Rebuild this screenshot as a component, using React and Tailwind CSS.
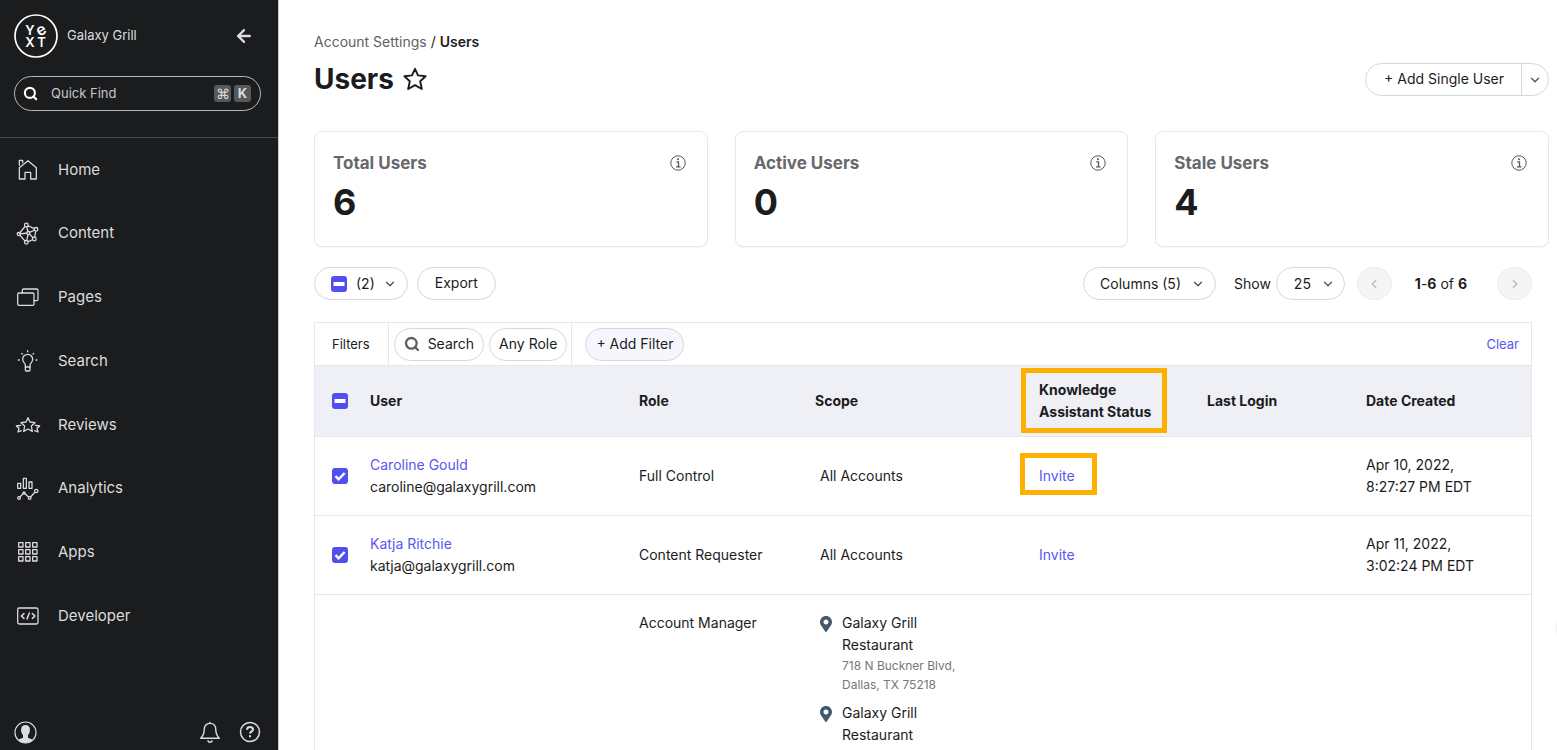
import { ArrowLeft, ChevronDown, ChevronLeft, ChevronRight, Search } from "lucide-react";
import { FaMapMarkerAlt } from "react-icons/fa";

const HomeIcon = () => (
  <>
    <path d="M13 66V32L39 11L64 32V66H47V46H30V66Z" />
    <path d="M13 25V10H23V17" />
  </>
);

const ContentIcon = () => (
  <>
    <path d="M34 12L63 25L58 54L34 64L11 39ZM40 36L34 12M40 36L63 25M40 36L58 54M40 36L34 64M40 36L11 39" />
    <g fill="#1b1c1e">
      <circle cx="34" cy="12" r="5.5" />
      <circle cx="63" cy="25" r="5.5" />
      <circle cx="58" cy="54" r="5.5" />
      <circle cx="34" cy="64" r="5.5" />
      <circle cx="11" cy="39" r="4.5" />
      <circle cx="40" cy="36" r="4.5" />
    </g>
  </>
);

const PagesIcon = () => (
  <>
    <rect x="8" y="27" width="49" height="37" rx="4" />
    <path d="M22 27V19Q22 15 26 15H65Q69 15 69 19V46Q69 50 65 50H57" />
  </>
);

const BulbIcon = () => (
  <>
    <path d="M31 57V51C31 46 23 44 23 34A15 15 0 0 1 53 34C53 44 45 46 45 51V57Z" />
    <path d="M31 57V66Q31 69 34 69H42Q45 69 45 66V57" />
    <path d="M38 8V11M20 16L22 18M56 16L54 18M10 36H13M63 36H66" />
  </>
);

const ReviewsIcon = () => (
  <>
    <path d="M39 17L45 30L60 32L49 42L52 58L39 51L26 58L29 42L18 32L33 30Z" />
    <path d="M17 40L4 42L12 49L9 60L19 56M61 40L74 42L66 49L69 60L59 56" />
  </>
);

const AnalyticsIcon = () => (
  <>
    <rect x="8" y="22" width="9" height="15" />
    <rect x="25" y="7" width="9" height="30" />
    <rect x="42" y="18" width="9" height="19" />
    <path d="M12 66L27 50L44 66L63 45" />
    <g fill="#1b1c1e">
      <circle cx="12" cy="66" r="4" />
      <circle cx="27" cy="51" r="3" />
      <circle cx="44" cy="66" r="4" />
      <circle cx="64" cy="45" r="5" />
    </g>
  </>
);

const AppsIcon = () => (
  <>
    {[11, 32, 53].map((y) =>
      [11, 32, 53].map((x) => <rect key={`${x}-${y}`} x={x} y={y} width="13" height="13" />)
    )}
  </>
);

const DeveloperIcon = () => (
  <>
    <rect x="8" y="15" width="61" height="48" rx="5" />
    <path d="M27 32L19 39L27 46M36 48L43 30M52 32L60 39L52 46" strokeWidth="4.5" />
  </>
);

const navItems = [
  ["Home", HomeIcon],
  ["Content", ContentIcon],
  ["Pages", PagesIcon],
  ["Search", BulbIcon],
  ["Reviews", ReviewsIcon],
  ["Analytics", AnalyticsIcon],
  ["Apps", AppsIcon],
  ["Developer", DeveloperIcon],
];

const stats = [
  ["Total Users", "6"],
  ["Active Users", "0"],
  ["Stale Users", "4"],
];

const users = [
  {
    name: "Caroline Gould",
    email: "caroline@galaxygrill.com",
    role: "Full Control",
    date: "Apr 10, 2022,",
    time: "8:27:27 PM EDT",
    highlight: true,
  },
  {
    name: "Katja Ritchie",
    email: "katja@galaxygrill.com",
    role: "Content Requester",
    date: "Apr 11, 2022,",
    time: "3:02:24 PM EDT",
    highlight: false,
  },
];

const locations = [
  ["718 N Buckner Blvd,", "Dallas, TX 75218"],
  ["3000 Blackburn St,", "Dallas, TX 75204"],
];

function Logo() {
  return (
    <svg viewBox="0 0 44 44" className="size-11 shrink-0" role="img" aria-label="Yext">
      <circle cx="22" cy="22" r="21" fill="none" stroke="#fff" strokeWidth="1.7" />
      <g fill="#fff" fontFamily="Inter, sans-serif" fontSize="13" fontWeight="600" textAnchor="middle">
        <text x="16" y="21">Y</text>
        <text x="27.5" y="21" fontSize="16" transform="rotate(-28 27.500 17)">e</text>
        <text x="16" y="33">X</text>
        <text x="27.5" y="33">T</text>
      </g>
    </svg>
  );
}

function Sidebar() {
  return (
    <aside className="flex w-[279px] shrink-0 flex-col border-r border-[#c9c9ca] bg-[#1b1c1e] text-[#dcdddf]">
      <div className="flex items-center px-3.5 pt-3.5">
        <Logo />
        <span className="ml-[9px] text-[13px]">Galaxy Grill</span>
        <button type="button" aria-label="Collapse menu" className="mr-2.5 ml-auto">
          <ArrowLeft className="size-5" strokeWidth={2.8} />
        </button>
      </div>
      <div className="px-3.5 pt-[18px] pr-[17px] pb-[26px]">
        <label className="flex h-[35px] items-center rounded-full border border-[#b8b9bb] pr-[9px] pl-2">
          <Search className="size-[15px] shrink-0 text-white" strokeWidth={3.4} />
          <input
            type="text"
            aria-label="Quick Find"
            placeholder="Quick Find"
            className="ml-[13px] w-full min-w-0 bg-transparent text-[13px] outline-none placeholder:text-[#c6c7c9]"
          />
          <kbd className="grid size-[17px] shrink-0 place-items-center rounded-[3px] bg-[#57585a] font-sans text-sm leading-none">⌘</kbd>
          <kbd className="ml-[3px] grid size-[17px] shrink-0 place-items-center rounded-[3px] bg-[#57585a] font-['Inter',sans-serif] text-[13px] leading-none font-bold">K</kbd>
        </label>
      </div>
      <nav className="grid h-[511px] grid-rows-8 border-t border-[#48494b]">
        {navItems.map(([label, Icon]) => (
          <a key={label} href="#" className="flex items-center gap-[17px] pl-[15px] text-[15px]">
            <svg
              viewBox="0 0 78 78"
              className="size-[26px]"
              fill="none"
              stroke="currentColor"
              strokeWidth="3.8"
              strokeLinejoin="round"
              strokeLinecap="round"
              aria-hidden="true"
            >
              <Icon />
            </svg>
            {label}
          </a>
        ))}
      </nav>
      <div className="mt-auto flex items-center px-3.5 pb-1.5 pr-4">
        <button type="button" aria-label="Account" className="mr-auto">
          <svg viewBox="0 0 24 24" className="size-[23px]" aria-hidden="true">
            <circle cx="12" cy="12" r="11" fill="none" stroke="#dcdddf" strokeWidth="1.2" />
            <path
              d="M12 4.3c3 0 4.7 2 4.6 5 0 2.500-1 4.300-2 5.400v2.600c0 .9 3.400 1.300 5.200 2.500A11 11 0 0 1 12 23a11 11 0 0 1-7.800-3.200c1.800-1.200 5.200-1.600 5.200-2.500v-2.600c-1-1.100-2-2.900-2-5.400-.1-3 1.600-5 4.600-5Z"
              fill="#dcdddf"
            />
          </svg>
        </button>
        <button type="button" aria-label="Notifications">
          <svg viewBox="0 0 24 24" className="size-6" fill="none" stroke="currentColor" strokeWidth="1.4" strokeLinejoin="round" aria-hidden="true">
            <path d="M12 3.400c-4.100 0-5.800 3-5.800 6.300 0 4.600-1.400 6.300-3.500 8.500h18.600c-2.100-2.200-3.500-3.900-3.500-8.500 0-3.300-1.700-6.300-5.800-6.300ZM12 1.800v1.600M10 20.200a2 2 0 0 0 4 0" />
          </svg>
        </button>
        <button type="button" aria-label="Help" className="ml-4">
          <svg viewBox="0 0 24 24" className="size-6" fill="none" stroke="currentColor" strokeWidth="1.5" aria-hidden="true">
            <circle cx="12" cy="12" r="9.500" />
            <path d="M9 9.800C9 8 10.300 7 12 7s3 1 3 2.600c0 2-3 2-3 4" strokeWidth="2" />
            <path d="M12 15.300v2" strokeWidth="2" />
          </svg>
        </button>
      </div>
    </aside>
  );
}

function Checkbox({ label, mixed }) {
  return (
    <span className="grid size-4 shrink-0">
      <input
        type="checkbox"
        defaultChecked
        aria-label={label}
        className="col-start-1 row-start-1 size-4 appearance-none rounded-[3px] bg-[#5150ef]"
      />
      <svg viewBox="0 0 16 16" className="pointer-events-none col-start-1 row-start-1 size-4" fill="none" stroke="#fff" aria-hidden="true">
        {mixed ? <path d="M2.500 8H13.500" strokeWidth="4" /> : <path d="M3.500 8.200L6.600 11.300L12.600 5" strokeWidth="2.500" />}
      </svg>
    </span>
  );
}

const Down = () => <ChevronDown className="size-3.5 text-[#3d566e]" strokeWidth={2.2} aria-hidden="true" />;

function InfoIcon() {
  return (
    <svg viewBox="0 0 16 16" className="size-4" fill="none" stroke="#55575b" aria-hidden="true">
      <circle cx="8" cy="8" r="7.200" />
      <path d="M6.300 6.800H8.500V11.800M6 11.900H10.500" strokeWidth="1.300" />
      <circle cx="8" cy="4.300" r="1" fill="#55575b" stroke="none" />
    </svg>
  );
}

const pill = "flex h-[33px] items-center rounded-full border border-[#d5d7da] bg-white";

function Header() {
  return (
    <header className="flex items-start justify-between">
      <div>
        <p className="text-sm leading-5 text-[#5f6165]">
          <a href="#">Account Settings</a> <span className="text-[#1b1c1e]">/</span>{" "}
          <span className="font-semibold text-[#1b1c1e]">Users</span>
        </p>
        <div className="mt-[9px] flex items-center gap-[9px]">
          <h1 className="text-[28px] leading-9 font-bold">Users</h1>
          <button type="button" aria-label="Add to favorites">
            <svg viewBox="0 0 24 24" className="size-6" fill="none" stroke="currentColor" strokeWidth="1.900" strokeLinejoin="round" aria-hidden="true">
              <path d="M12 1.800L15 8.400L22.600 9.200L17.200 14.200L18.800 22L12 18.200L5.200 22L6.800 14.200L1.400 9.200L9 8.400Z" />
            </svg>
          </button>
        </div>
      </div>
      <div className="mt-[31px] flex h-[33px] rounded-full border border-[#d5d7da] text-sm">
        <button type="button" className="pr-[17px] pb-0.5 pl-[18px]">+ Add Single User</button>
        <button type="button" aria-label="More add options" className="border-l border-[#d5d7da] px-1.5">
          <Down />
        </button>
      </div>
    </header>
  );
}

function Toolbar() {
  return (
    <div className="mt-5 mr-[17px] flex items-center text-sm">
      <div className={`${pill} pr-2.5 pl-4`}>
        <Checkbox label="Select all users" mixed />
        <button type="button" className="ml-[9px] flex items-center gap-2">
          (2) <Down />
        </button>
      </div>
      <button type="button" className={`${pill} ml-[9px] px-[17px] pb-0.5`}>Export</button>
      <button type="button" className={`${pill} ml-auto gap-2.5 pr-2.5 pl-4`}>
        Columns (5) <Down />
      </button>
      <label htmlFor="page-size" className="mr-[5px] ml-[18px]">Show</label>
      <span className="grid items-center">
        <select
          id="page-size"
          defaultValue="25"
          className="col-start-1 row-start-1 h-[33px] w-[69px] appearance-none rounded-full border border-[#d5d7da] bg-white pl-[17px]"
        >
          <option>25</option>
          <option>50</option>
        </select>
        <span className="pointer-events-none col-start-1 row-start-1 mr-2.5 justify-self-end">
          <Down />
        </span>
      </span>
      <button type="button" aria-label="Previous page" disabled className="ml-3 grid h-[33px] w-[35px] place-items-center rounded-full border border-[#ebebec] bg-[#f5f5f5] text-[#b4b8bd]">
        <ChevronLeft className="size-3.5" />
      </button>
      <span className="mr-[30px] ml-[23px]">
        <b className="font-bold">1</b>-<b className="font-bold">6</b> of <b className="font-bold">6</b>
      </span>
      <button type="button" aria-label="Next page" disabled className="grid h-[33px] w-[35px] place-items-center rounded-full border border-[#ebebec] bg-[#f5f5f5] text-[#b4b8bd]">
        <ChevronRight className="size-3.5" />
      </button>
    </div>
  );
}

function Filters() {
  return (
    <div className="flex h-[43px] border-b border-[#e6e7ec] text-sm">
      <span className="flex items-center border-r border-[#e6e7ec] pr-[18px] pl-[17px] text-[13px]">Filters</span>
      <div className="flex items-center gap-[5px] border-r border-[#e6e7ec] pr-1 pl-[5px]">
        <button type="button" className={`${pill} gap-2 px-[9px]`}>
          <Search className="size-4 text-[#5d5f63]" strokeWidth={3.4} aria-hidden="true" />
          Search
        </button>
        <button type="button" className={`${pill} px-[9px]`}>Any Role</button>
      </div>
      <div className="flex items-center pl-[13px]">
        <button type="button" className="h-[33px] rounded-full border border-[#d5d7da] bg-[#f6f7fd] px-2.5">+ Add Filter</button>
      </div>
      <button type="button" className="mr-3 ml-auto text-[13px] text-[#5a57ee]">Clear</button>
    </div>
  );
}

function UsersTable() {
  return (
    <table className="w-full table-fixed text-left text-sm leading-[22px]">
      <colgroup>
        <col className="w-[55px]" />
        <col />
        <col className="w-[176px]" />
        <col className="w-[224px]" />
        <col className="w-[168px]" />
        <col className="w-[159px]" />
        <col className="w-[165px]" />
      </colgroup>
      <thead>
        <tr className="h-[70px] border-b border-[#e6e7ec] bg-[#eff0f6]">
          <th className="pl-[17px]">
            <Checkbox label="Select every row" mixed />
          </th>
          <th className="font-bold">User</th>
          <th className="font-bold">Role</th>
          <th className="font-bold">Scope</th>
          <th className="font-bold">
            <div className="relative w-[118px]">
              Knowledge Assistant Status
              <span className="pointer-events-none absolute -top-[11px] -right-2.5 -bottom-2.5 -left-[18px] border-[5px] border-[#fdb002]" />
            </div>
          </th>
          <th className="font-bold">Last Login</th>
          <th className="font-bold">Date Created</th>
        </tr>
      </thead>
      <tbody>
        {users.map((user) => (
          <tr key={user.name} className="h-[79px] border-b border-[#e6e7ec]">
            <td className="pl-[17px]">
              <Checkbox label={`Select ${user.name}`} />
            </td>
            <td>
              <a href="#" className="block text-[#5a57ee]">{user.name}</a>
              {user.email}
            </td>
            <td>{user.role}</td>
            <td className="pl-[5px]">All Accounts</td>
            <td>
              <a href="#" className="relative inline-block text-[#5a57ee]">
                Invite
                {user.highlight && (
                  <span className="pointer-events-none absolute -top-3 -right-[22px] -bottom-2 -left-[19px] border-[5px] border-[#fdb002]" />
                )}
              </a>
            </td>
            <td />
            <td>
              {user.date}
              <br />
              {user.time}
            </td>
          </tr>
        ))}
        <tr className="align-top">
          <td />
          <td />
          <td className="pt-[17px]">Account Manager</td>
          <td className="pt-[17px] pl-[5px]">
            {locations.map(([street, city]) => (
              <div key={street} className="mb-2 flex gap-2.5">
                <FaMapMarkerAlt className="mt-1 h-4 w-3 shrink-0 text-[#43596b]" aria-hidden="true" />
                <address className="w-[130px] not-italic">
                  <span className="block w-20">Galaxy Grill Restaurant</span>
                  <span className="block text-xs leading-[19px] text-[#75777b]">
                    {street}
                    <br />
                    {city}
                  </span>
                </address>
              </div>
            ))}
          </td>
          <td />
          <td />
          <td />
        </tr>
      </tbody>
    </table>
  );
}

export default function App() {
  return (
    <div className="flex h-screen overflow-hidden bg-white font-['Inter',sans-serif] text-[#1b1c1e]">
      <Sidebar />
      <main className="min-w-0 flex-1 overflow-hidden pt-8 pr-2 pl-[35px]">
        <Header />
        <section className="mt-[34px] grid grid-cols-3 gap-[27px]" aria-label="User totals">
          {stats.map(([label, value]) => (
            <div key={label} className="h-[116px] rounded-lg border border-[#e6e7ec] px-[18px] pt-[18px] shadow-[0_1px_1px_rgba(30,30,60,0.04)]">
              <div className="flex items-center justify-between pr-[3px]">
                <h2 className="text-[17px] leading-[26px] font-bold text-[#66686c]">{label}</h2>
                <button type="button" aria-label={`About ${label}`}>
                  <InfoIcon />
                </button>
              </div>
              <p className="mt-1 text-4xl leading-11 font-bold">{value}</p>
            </div>
          ))}
        </section>
        <Toolbar />
        <section className="mt-[22px] mr-[17px] border border-[#e6e7ec]" aria-label="Users">
          <Filters />
          <UsersTable />
        </section>
      </main>
      <div className="fixed top-[614px] -right-7 size-7 rounded-full bg-white shadow-[0_0_3px_rgba(0,0,0,0.15)]" />
    </div>
  );
}
